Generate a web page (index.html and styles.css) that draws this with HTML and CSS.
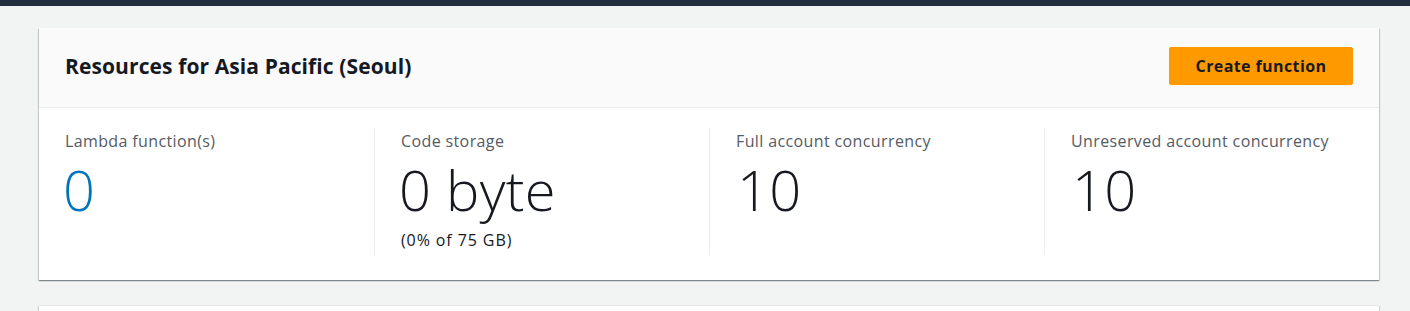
FILE: index.html
```html
<!DOCTYPE html>
<html lang="en">
<head>
<meta charset="utf-8">
<title>Lambda dashboard</title>
<link rel="stylesheet" href="styles.css">
</head>
<body>
<div class="topbar"></div>
<main class="content">
  <section class="card">
    <header class="card-header">
      <h2 class="card-title">Resources for Asia Pacific (Seoul)</h2>
      <button class="btn-primary" type="button">Create function</button>
    </header>
    <div class="card-body">
      <div class="stat">
        <div class="stat-label">Lambda function(s)</div>
        <div class="stat-value link">0</div>
      </div>
      <div class="stat">
        <div class="stat-label">Code storage</div>
        <div class="stat-value">0 byte</div>
        <div class="stat-note">(0% of 75 GB)</div>
      </div>
      <div class="stat">
        <div class="stat-label">Full account concurrency</div>
        <div class="stat-value num">10</div>
      </div>
      <div class="stat">
        <div class="stat-label">Unreserved account concurrency</div>
        <div class="stat-value num">10</div>
      </div>
    </div>
  </section>
  <section class="card card-next"></section>
</main>
</body>
</html>
```

FILE: styles.css
```css
* { box-sizing: border-box; }
html, body {
  margin: 0;
  padding: 0;
  background: #f2f3f3;
  font-family: "Open Sans", "Noto Sans", Arial, sans-serif;
  color: #16191f;
  overflow: hidden;
}
.topbar {
  height: 6px;
  background: #232f3e;
}
.content {
  padding: 22px 31px 0 39px;
  display: flex;
  flex-direction: column;
  gap: 26px;
}
.card {
  background: #fff;
  box-shadow: 0 1px 1px 0 rgba(0, 28, 36, 0.3), 1px 1px 1px 0 rgba(0, 28, 36, 0.15), -1px 1px 1px 0 rgba(0, 28, 36, 0.15);
}
.card-header {
  background: #fafafa;
  border-bottom: 1px solid #eaeded;
  height: 80px;
  padding: 0 26px 4px;
  display: flex;
  align-items: center;
  justify-content: space-between;
}
.card-title {
  margin: 0;
  font-size: 21px;
  font-weight: 700;
  color: #16191f;
  line-height: 26px;
  letter-spacing: 0.1px;
}
.btn-primary {
  font-family: inherit;
  background: #ff9900;
  border: 1px solid #ff9900;
  border-radius: 2px;
  color: #16191f;
  font-size: 16px;
  font-weight: 700;
  letter-spacing: 0.4px;
  height: 38px;
  width: 184px;
  padding: 0 20px;
}
.card-body {
  display: grid;
  grid-template-columns: repeat(4, 1fr);
  padding: 20px 0 25px;
}
.stat {
  padding: 0 26px;
  min-height: 127px;
  border-left: 1px solid #eaeded;
}
.stat:first-child { border-left: none; }
.stat-label {
  font-size: 16px;
  line-height: 26px;
  color: #545b64;
  letter-spacing: 0.38px;
}
.stat-value {
  font-size: 56px;
  font-weight: 300;
  line-height: 70px;
  color: #16191f;
  margin-left: -2px;
  letter-spacing: 0.3px;
}
.stat-value.num { margin-left: 1px; }
.stat-value.link { color: #0073bb; }
.stat-note {
  font-size: 16px;
  line-height: 22px;
  color: #16191f;
  letter-spacing: 0.9px;
  margin-top: 5px;
}
.card-next {
  height: 40px;
  box-shadow: -1px 0 1px 0 rgba(0, 28, 36, 0.15), 1px 0 1px 0 rgba(0, 28, 36, 0.15);
}
```
